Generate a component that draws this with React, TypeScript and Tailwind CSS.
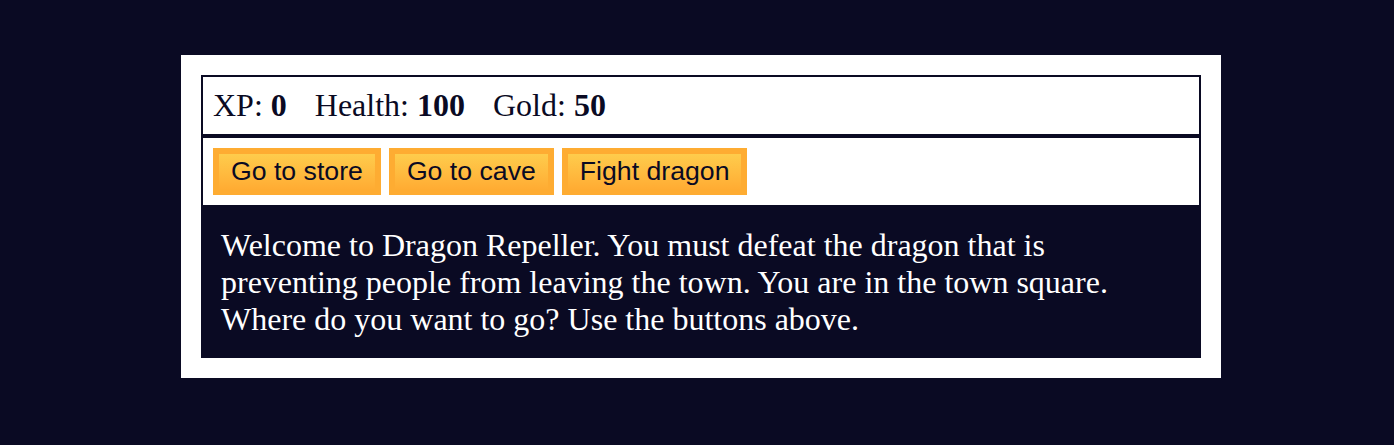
import React from "react";

const serif = "font-['Liberation_Serif','Times_New_Roman',serif]";

const Stat: React.FC<{ label: string; value: number }> = ({ label, value }) => (
  <span className="pr-[20px]">
    {label}: <strong className="font-bold">{value}</strong>
  </span>
);

const GameButton: React.FC<{ children: React.ReactNode }> = ({ children }) => (
  <button className="cursor-pointer border-[6px] border-[#feac32] bg-[#feac32] bg-linear-to-b from-[#fecc4c] to-[#ffac33] px-[12px] py-[2px] font-['Liberation_Sans',Arial,sans-serif] text-[26.67px] leading-[30.6px] text-[#0a0a23]">
    {children}
  </button>
);

export default function App() {
  return (
    <div className={`min-h-[445px] w-full bg-[#0a0a23] pl-[8px] pt-[55px] ${serif}`}>
      <div className="mx-auto w-[1040px] bg-white p-[20px]">
        <div className="border-2 border-[#0a0a23] p-[10px] text-[32px] leading-[37px] text-[#0a0a23]">
          <Stat label="XP" value={0} /> <Stat label="Health" value={100} />{" "}
          <Stat label="Gold" value={50} />
        </div>
        <div className="flex items-start gap-[8px] border-2 border-[#0a0a23] p-[10px]">
          <GameButton>Go to store</GameButton>
          <GameButton>Go to cave</GameButton>
          <GameButton>Fight dragon</GameButton>
        </div>
        <div className="bg-[#0a0a23] p-[20px] text-[32px] leading-[37px] text-white">
          Welcome to Dragon Repeller. You must defeat the dragon that is preventing people from leaving the town. You
          are in the town square. Where do you want to go? Use the buttons above.
        </div>
      </div>
    </div>
  );
}
